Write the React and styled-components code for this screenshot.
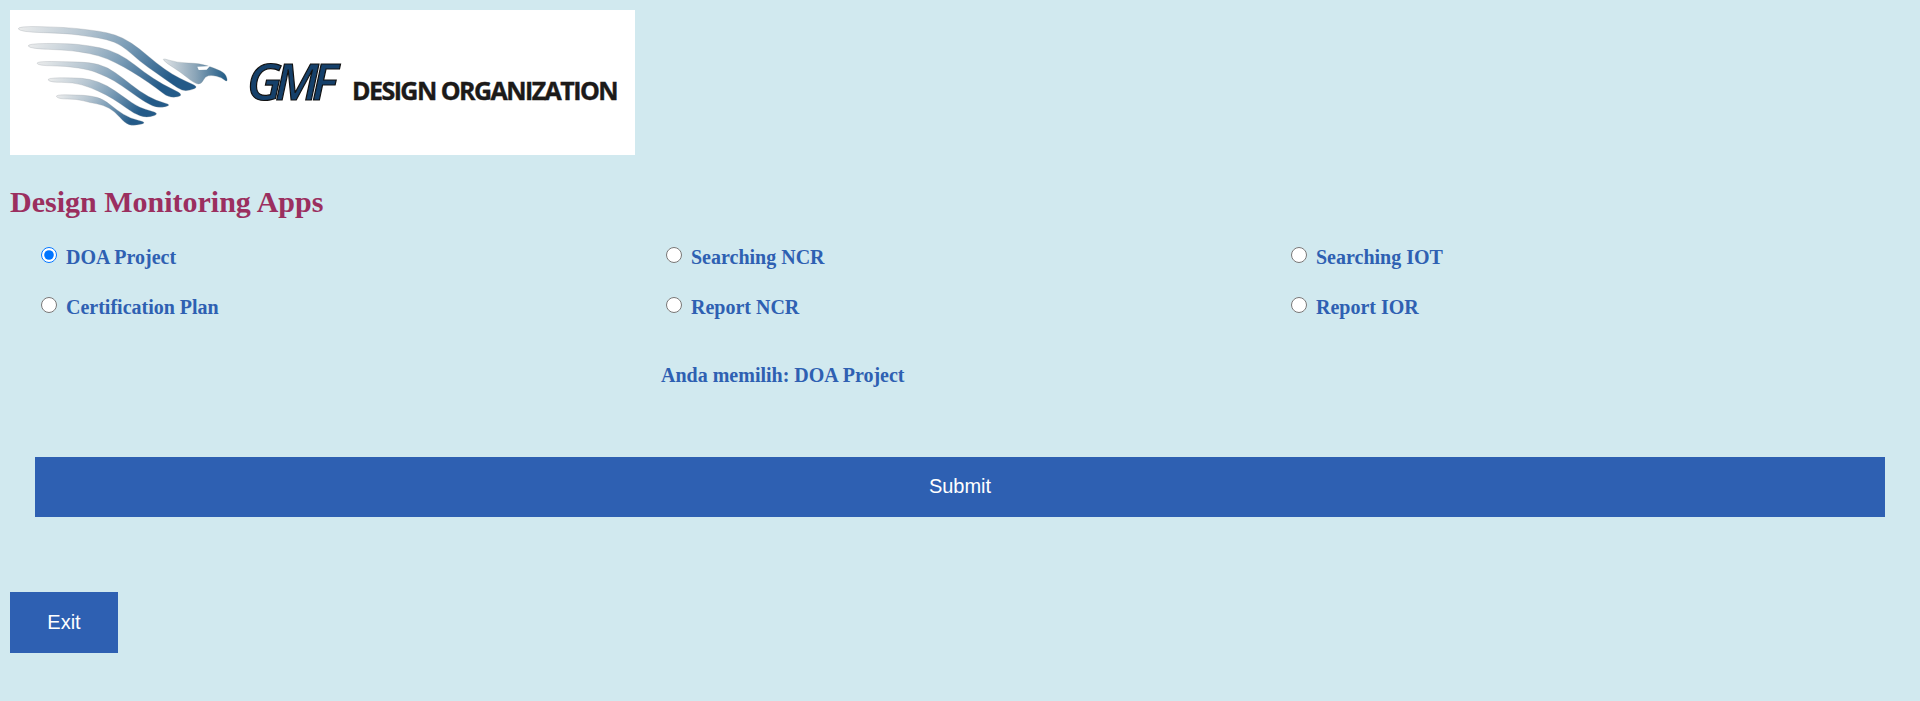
import React, { useState } from 'react';
import styled, { createGlobalStyle } from 'styled-components';

const GlobalStyle = createGlobalStyle`
  html, body {
    margin: 0;
    background: #d1e9ef;
  }
  body {
    font-family: "Liberation Serif", "Times New Roman", serif;
  }
`;

const Page = styled.div`
  padding: 10px;
  height: 701px;
  box-sizing: border-box;
  overflow: hidden;
`;

const LogoBox = styled.div`
  width: 625px;
  height: 145px;
  background: #fff;

  svg {
    display: block;
  }
`;

const Title = styled.h2`
  margin: 30px 0 0;
  font-size: 30px;
  line-height: 34px;
  font-weight: bold;
  color: #9b2f5f;
`;

const OptionGrid = styled.div`
  display: grid;
  grid-template-columns: repeat(3, 625px);
  grid-auto-rows: 50px;
  margin: 25px 0 0 31px;
`;

const Option = styled.label`
  display: flex;
  align-items: center;
  font-size: 20px;
  font-weight: bold;
  color: #2e60b2;
  height: 27px;

  input {
    width: 16px;
    height: 16px;
    margin: 0 9px 5px 0;
  }
`;

const Chosen = styled.p`
  margin: 18px 0 0 651px;
  font-size: 20px;
  line-height: 27px;
  font-weight: bold;
  color: #2e60b2;
`;

const ActionButton = styled.button`
  display: block;
  border: 0;
  padding: 0;
  background: #2e60b2;
  color: #fff;
  font-family: "Liberation Sans", Arial, sans-serif;
  font-size: 20px;
`;

const SubmitButton = styled(ActionButton)`
  width: 1850px;
  height: 60px;
  margin: 68px 0 0 25px;
  padding-bottom: 2px;
`;

const ExitButton = styled(ActionButton)`
  width: 108px;
  height: 61px;
  margin-top: 75px;
`;

const options = [
  'DOA Project',
  'Searching NCR',
  'Searching IOT',
  'Certification Plan',
  'Report NCR',
  'Report IOR',
];

// outline points read off the logo at 3x, smoothed below
const feathers = [
  [[50, 78], [200, 82], [270, 90], [320, 97], [370, 113], [420, 147], [470, 190], [520, 225], [560, 245], [596, 261], [570, 272], [545, 272], [520, 255], [470, 220], [420, 185], [365, 135], [320, 118], [270, 110], [200, 100], [60, 96]],
  [[80, 131], [200, 130], [270, 137], [330, 150], [380, 175], [430, 215], [490, 255], [556, 285], [510, 296], [470, 265], [420, 230], [370, 200], [320, 175], [270, 160], [200, 150], [90, 146]],
  [[108, 184], [200, 185], [270, 187], [320, 200], [370, 235], [420, 275], [470, 303], [518, 315], [475, 325], [440, 310], [390, 275], [340, 240], [300, 222], [270, 210], [200, 198], [115, 197]],
  [[140, 234], [220, 233], [270, 237], [320, 255], [370, 290], [420, 325], [482, 340], [440, 355], [400, 340], [360, 310], [320, 285], [270, 262], [220, 247], [150, 247]],
  [[165, 284], [230, 285], [270, 287], [310, 297], [350, 330], [390, 355], [444, 368], [400, 378], [375, 370], [345, 335], [310, 315], [270, 308], [230, 297], [175, 297]],
];

const head = [[484, 173], [530, 188], [600, 190], [645, 205], [677, 220], [684, 248], [665, 233], [635, 225], [615, 230], [605, 252], [585, 252], [540, 215], [500, 190]];

const smoothPath = (pts) => {
  const mid = (a, b) => [(a[0] + b[0]) / 2, (a[1] + b[1]) / 2];
  const start = mid(pts[pts.length - 1], pts[0]);
  let d = `M${start[0]} ${start[1]}`;
  pts.forEach((p, i) => {
    const m = mid(p, pts[(i + 1) % pts.length]);
    d += ` Q${p[0]} ${p[1]} ${m[0]} ${m[1]}`;
  });
  return d + ' Z';
};

const LogoMark = () => (
  <svg width="625" height="145" viewBox="10 10 625 145">
    <defs>
      <linearGradient id="featherFill" x1="0" y1="0" x2="1" y2="0.25">
        <stop offset="0" stopColor="#eceded" />
        <stop offset="0.38" stopColor="#b4c4d0" />
        <stop offset="0.65" stopColor="#7a9cb6" />
        <stop offset="1" stopColor="#235a88" />
      </linearGradient>
      <linearGradient id="headFill" x1="0" y1="0" x2="1" y2="0">
        <stop offset="0" stopColor="#dfe3e6" />
        <stop offset="0.5" stopColor="#8ba5b8" />
        <stop offset="1" stopColor="#1f5a85" />
      </linearGradient>
    </defs>
    <g transform="scale(0.3333)">
      {feathers.map((pts, i) => (
        <path key={i} d={smoothPath(pts)} fill="url(#featherFill)" stroke="#8d969b" strokeWidth="0.8" />
      ))}
      <path d={smoothPath(head)} fill="url(#headFill)" stroke="#7d8b95" strokeWidth="0.8" />
      <path d="M592 200 L630 198 L620 209 L596 210 Z" fill="#fff" />
    </g>
    <text
      x="247"
      y="100"
      fontFamily="'Open Sans', sans-serif"
      fontStyle="italic"
      fontSize="51"
      fontWeight="600"
      letterSpacing="-7"
      fill="#15406a"
      stroke="#111"
      strokeWidth="1.2"
    >
      GMF
    </text>
    <text
      x="352"
      y="100"
      fontFamily="'Open Sans', sans-serif"
      fontSize="25"
      fontWeight="700"
      letterSpacing="-1.55"
      fill="#1c1a19"
      stroke="#1c1a19"
      strokeWidth="0.4"
    >
      DESIGN ORGANIZATION
    </text>
  </svg>
);

const App = () => {
  const [selected, setSelected] = useState('DOA Project');

  return (
    <Page>
      <GlobalStyle />
      <LogoBox>
        <LogoMark />
      </LogoBox>
      <Title>Design Monitoring Apps</Title>
      <OptionGrid>
        {options.map((name) => (
          <Option key={name}>
            <input
              type="radio"
              name="app"
              checked={selected === name}
              onChange={() => setSelected(name)}
            />
            {name}
          </Option>
        ))}
      </OptionGrid>
      <Chosen>Anda memilih: {selected}</Chosen>
      <SubmitButton type="button">Submit</SubmitButton>
      <ExitButton type="button">Exit</ExitButton>
    </Page>
  );
};

export default App;
